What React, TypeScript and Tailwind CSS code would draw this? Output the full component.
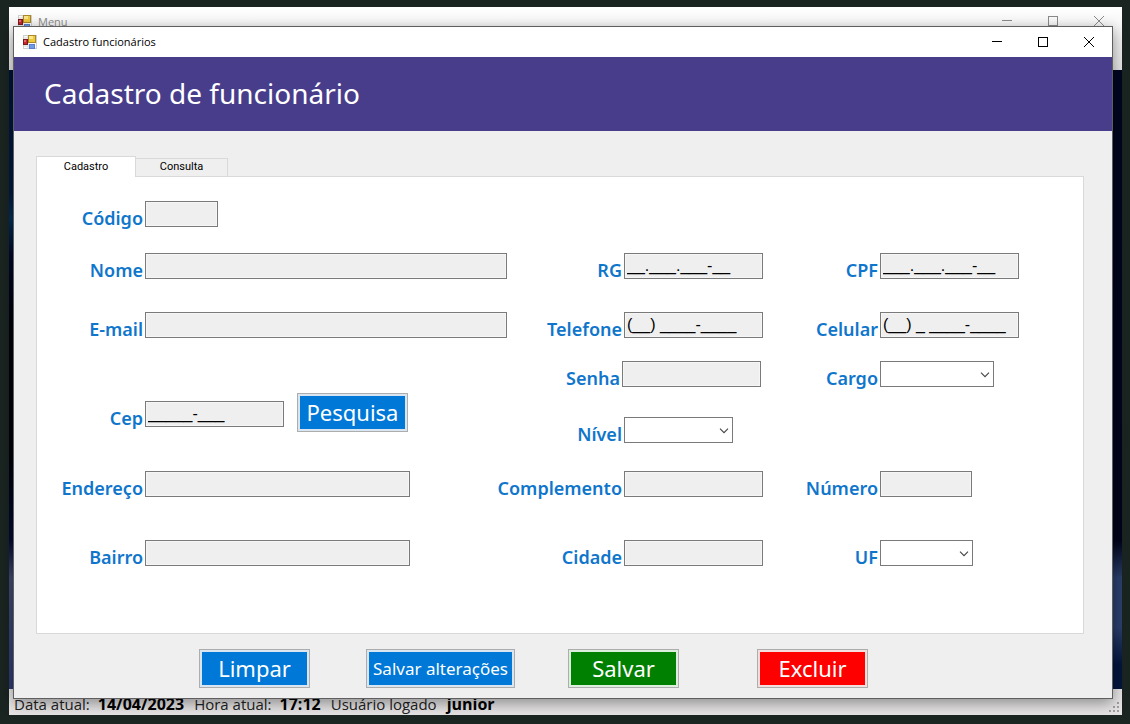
import type { ReactNode } from "react";

function FormIcon() {
  return (
    <svg viewBox="0 0 14 14" className="size-[14px] shrink-0" aria-hidden="true">
      <rect x="0.5" y="0.5" width="13" height="13" fill="#fbfbfb" stroke="#cfcfcf" />
      <path d="M5 1V13M1 3H5M1 11H5" stroke="#d9d9d9" />
      <rect x="0.5" y="4.5" width="4" height="5" fill="#c8262c" stroke="#7d1a1e" />
      <rect x="1" y="5" width="2" height="2" fill="#e06a6c" />
      <rect x="5.5" y="0.5" width="7" height="7" fill="#efc93c" stroke="#a88a28" />
      <rect x="6" y="1" width="4" height="3" fill="#fae58a" />
      <rect x="6.5" y="9.5" width="5" height="4" fill="#6f9ae8" stroke="#5b7fcb" />
    </svg>
  );
}

function WindowControls({ muted }: { muted?: boolean }) {
  const tone = muted ? "text-[#8a8a8a]" : "text-black";
  const button = "flex w-[46px] items-center justify-center";
  return (
    <div className={`flex ${tone}`}>
      <button type="button" aria-label="Minimizar" className={button}>
        <svg viewBox="0 0 10 10" className="size-[10px]" stroke="currentColor">
          <path d="M0 4.5H10" />
        </svg>
      </button>
      <button type="button" aria-label="Maximizar" className={button}>
        <svg viewBox="0 0 10 10" className="size-[10px]" fill="none" stroke="currentColor">
          <rect x="0.5" y="0.5" width="9" height="9" />
        </svg>
      </button>
      <button type="button" aria-label="Fechar" className={button}>
        <svg viewBox="0 0 10 10" className="size-[10px]" stroke="currentColor">
          <path d="M0 0L10 10M10 0L0 10" />
        </svg>
      </button>
    </div>
  );
}

type RowProps = { id: string; label: string; labelWidth: string; children: ReactNode };

function Row({ id, label, labelWidth, children }: RowProps) {
  return (
    <div className="flex h-[26px]">
      <label
        htmlFor={id}
        className={`flex shrink-0 justify-end pt-[5px] pr-[2px] text-[18px] leading-[24px] font-semibold whitespace-nowrap text-[#0f76cc] ${labelWidth}`}
      >
        {label}
      </label>
      {children}
    </div>
  );
}

function TextBox({ id, width, value, type = "text" }: { id: string; width: string; value?: string; type?: string }) {
  return (
    <input
      id={id}
      type={type}
      defaultValue={value}
      className={`h-[26px] min-w-0 border border-[#7a7a7a] bg-[#efefef] px-[2px] font-['Liberation_Sans',sans-serif] text-[16px] leading-[24px] text-black shadow-[inset_0_0_0_1px_#f6f6f6] ${width}`}
    />
  );
}

function DropDown({ id, width }: { id: string; width: string }) {
  return (
    <div className={`relative h-[26px] ${width}`}>
      <select id={id} className="size-full appearance-none border border-[#7a7a7a] bg-white">
        <option value=""></option>
      </select>
      <svg
        viewBox="0 0 10 6"
        className="pointer-events-none absolute top-[11px] right-1 h-[6px] w-[10px]"
        fill="none"
        stroke="#444"
        strokeWidth="1.1"
        aria-hidden="true"
      >
        <path d="M1 0.7L5 4.7L9 0.7" />
      </svg>
    </div>
  );
}

function ActionButton({ children, look }: { children: ReactNode; look: string }) {
  return (
    <button type="button" className={`flex h-[39px] items-center justify-center border border-[#adadad] whitespace-nowrap text-white ${look}`}>
      {children}
    </button>
  );
}

const LEFT = "w-[108px]";
const MIDDLE = "w-[117px]";
const RIGHT = "w-[117px]";

function EmployeeForm() {
  return (
    <form className="grid grid-cols-[470fr_256fr_320fr] pt-6 pb-[67px]">
      <div className="flex flex-col">
        <Row id="codigo" label="Código" labelWidth={LEFT}>
          <TextBox id="codigo" width="w-[73px]" />
        </Row>
        <div className="mt-[26px]">
          <Row id="nome" label="Nome" labelWidth={LEFT}>
            <TextBox id="nome" width="flex-1" />
          </Row>
        </div>
        <div className="mt-[33px]">
          <Row id="email" label="E-mail" labelWidth={LEFT}>
            <TextBox id="email" width="flex-1" type="email" />
          </Row>
        </div>
        <div className="mt-[55px] flex h-[39px] gap-[13px]">
          <div className="pt-2">
            <Row id="cep" label="Cep" labelWidth={LEFT}>
              <TextBox id="cep" width="w-[139px]" value="_____-___" />
            </Row>
          </div>
          <ActionButton look="w-[111px] bg-[#0078d7] text-[22px] shadow-[inset_0_0_0_2px_#d9e6f2]">Pesquisa</ActionButton>
        </div>
        <div className="mt-[39px]">
          <Row id="endereco" label="Endereço" labelWidth={LEFT}>
            <TextBox id="endereco" width="w-[265px]" />
          </Row>
        </div>
        <div className="mt-[43px]">
          <Row id="bairro" label="Bairro" labelWidth={LEFT}>
            <TextBox id="bairro" width="w-[265px]" />
          </Row>
        </div>
      </div>

      <div className="flex flex-col pt-[52px]">
        <Row id="rg" label="RG" labelWidth={MIDDLE}>
          <TextBox id="rg" width="w-[139px]" value="__.___.___-__" />
        </Row>
        <div className="mt-[33px]">
          <Row id="telefone" label="Telefone" labelWidth={MIDDLE}>
            <TextBox id="telefone" width="w-[139px]" value="(__) ____-____" />
          </Row>
        </div>
        <div className="mt-[23px]">
          <Row id="senha" label="Senha" labelWidth="w-[115px]">
            <TextBox id="senha" width="w-[139px]" type="password" />
          </Row>
        </div>
        <div className="mt-[30px]">
          <Row id="nivel" label="Nível" labelWidth={MIDDLE}>
            <DropDown id="nivel" width="w-[109px]" />
          </Row>
        </div>
        <div className="mt-[28px]">
          <Row id="complemento" label="Complemento" labelWidth={MIDDLE}>
            <TextBox id="complemento" width="w-[139px]" />
          </Row>
        </div>
        <div className="mt-[43px]">
          <Row id="cidade" label="Cidade" labelWidth={MIDDLE}>
            <TextBox id="cidade" width="w-[139px]" />
          </Row>
        </div>
      </div>

      <div className="flex flex-col pt-[52px]">
        <Row id="cpf" label="CPF" labelWidth={RIGHT}>
          <TextBox id="cpf" width="w-[139px]" value="___.___.___-__" />
        </Row>
        <div className="mt-[33px]">
          <Row id="celular" label="Celular" labelWidth={RIGHT}>
            <TextBox id="celular" width="w-[139px]" value="(__) _ ____-____" />
          </Row>
        </div>
        <div className="mt-[23px]">
          <Row id="cargo" label="Cargo" labelWidth={RIGHT}>
            <DropDown id="cargo" width="w-[114px]" />
          </Row>
        </div>
        <div className="mt-[84px]">
          <Row id="numero" label="Número" labelWidth={RIGHT}>
            <TextBox id="numero" width="w-[92px]" />
          </Row>
        </div>
        <div className="mt-[43px]">
          <Row id="uf" label="UF" labelWidth={RIGHT}>
            <DropDown id="uf" width="w-[93px]" />
          </Row>
        </div>
      </div>
    </form>
  );
}

function MenuWindow() {
  return (
    <section className="col-start-1 row-start-1 mt-[7px] mr-2 mb-[9px] ml-[9px] flex flex-col bg-white">
      <header className="flex h-[63px] items-start justify-between bg-linear-to-b from-white to-[#e4e4e4]">
        <div className="flex items-center gap-[6px] pt-[6px] pl-[9px] text-[11px] leading-[18px] text-[#8a8a8a]">
          <FormIcon />
          <span>Menu</span>
        </div>
        <div className="flex h-[28px]">
          <WindowControls muted />
        </div>
      </header>
      <div className="flex flex-1 justify-between">
        <div className="w-8 bg-[linear-gradient(to_bottom,#001238,#011a42_20%,#013058_24%,#00082a_30%,#000008_42%,#000008_62%,#020b33_76%,#3f4b70_82%,#2c3976)]" />
        <div className="w-8 bg-[linear-gradient(to_bottom,#000620,#00031a_76%,#2a3f6b_82%,#2a3f6b_90%,#04163f_96%)]" />
      </div>
      <footer className="flex h-[26px] items-center bg-[#e6e4e4] pl-[5px] text-[15px] leading-[20px] text-[#222]">
        <span className="pt-1">Data atual:</span>
        <strong className="pt-1 pl-2 text-[16px] text-black">14/04/2023</strong>
        <span className="pt-1 pl-[10px]">Hora atual:</span>
        <strong className="pt-1 pl-2 text-[16px] text-black">17:12</strong>
        <span className="pt-1 pl-[10px]">Usuário logado</span>
        <strong className="pt-1 pl-[10px] text-[16px] text-black">junior</strong>
        <svg viewBox="0 0 10 10" className="mt-auto mr-[3px] mb-[3px] ml-auto size-[10px]" fill="#a0a0a0" aria-hidden="true">
          <path d="M8 0h2v2H8zM4 4h2v2H4zM8 4h2v2H8zM0 8h2v2H0zM4 8h2v2H4zM8 8h2v2H8z" />
        </svg>
      </footer>
    </section>
  );
}

export default function App() {
  return (
    <main className="grid min-h-screen bg-[#1a2421] font-['Open_Sans',sans-serif]">
      <MenuWindow />
      <section className="z-10 col-start-1 row-start-1 mt-[26px] mr-[17px] mb-[25px] ml-[13px] flex flex-col border border-[#5f5f5f] bg-[#efefef] shadow-[0_4px_14px_rgba(0,0,0,0.4)]">
        <header className="flex h-[30px] justify-between bg-white">
          <div className="flex items-center gap-[6px] pl-[9px] text-[11px] text-black">
            <FormIcon />
            <span>Cadastro funcionários</span>
          </div>
          <WindowControls />
        </header>
        <div className="flex h-[74px] items-center bg-[#483d8b] pl-[30px]">
          <h1 className="pb-[2px] font-['Noto_Sans',sans-serif] text-[28px] text-white">Cadastro de funcionário</h1>
        </div>

        <div className="mt-[25px] mr-7 ml-[22px] flex flex-col">
          <div role="tablist" className="flex items-end font-['Roboto',sans-serif] text-[11px] text-black">
            <button type="button" role="tab" aria-selected="true" className="z-10 -mb-px h-[21px] w-[100px] border border-b-0 border-[#d9d9d9] bg-white">
              Cadastro
            </button>
            <button type="button" role="tab" aria-selected="false" className="h-[18px] w-[92px] border border-b-0 border-l-0 border-[#d9d9d9]">
              Consulta
            </button>
          </div>
          <div role="tabpanel" className="border border-[#d9d9d9] bg-white font-['Noto_Sans',sans-serif]">
            <EmployeeForm />
          </div>
        </div>

        <div className="flex pt-[15px] pb-[10px] pl-[185px] font-['Noto_Sans',sans-serif]">
          <ActionButton look="w-[111px] bg-[#0078d7] text-[22px] shadow-[inset_0_0_0_2px_#d9e6f2]">Limpar</ActionButton>
          <ActionButton look="ml-14 w-[149px] bg-[#0078d7] text-[17px] shadow-[inset_0_0_0_2px_#d9e6f2]">Salvar alterações</ActionButton>
          <ActionButton look="ml-[53px] w-[111px] bg-[#008000] text-[22px] shadow-[inset_0_0_0_2px_#dcefdc]">Salvar</ActionButton>
          <ActionButton look="ml-[78px] w-[111px] bg-[#ff0000] text-[22px] shadow-[inset_0_0_0_2px_#f5dede]">Excluir</ActionButton>
        </div>
      </section>
    </main>
  );
}
